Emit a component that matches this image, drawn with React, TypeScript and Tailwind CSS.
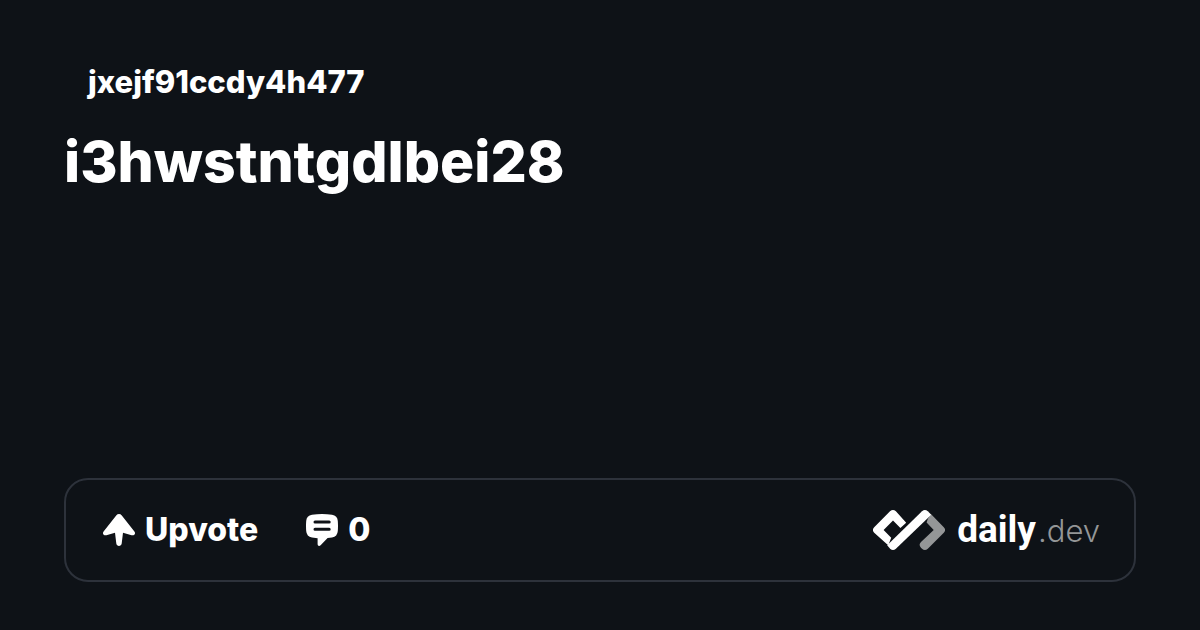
interface Post {
  author: string;
  title: string;
  comments: number;
}

const post: Post = {
  author: 'jxejf91ccdy4h477',
  title: 'i3hwstntgdlbei28',
  comments: 0,
};

function UpvoteIcon() {
  return (
    <svg className="h-8 w-8" viewBox="0 0 32 32" fill="currentColor" aria-hidden="true">
      <path d="M13.2 1.4C14.8-.4 17.2-.4 18.8 1.4L31.4 17.4C33 19.6 31.3 22 28.6 21.2L20 18.8L18.7 29.6C18.4 32.8 13.6 32.8 13.3 29.6L12 18.8L3.4 21.2C.7 22-1 19.6.6 17.4Z" />
    </svg>
  );
}

function CommentIcon() {
  return (
    <svg className="h-8 w-8" viewBox="0 0 32 32" fill="currentColor" aria-hidden="true">
      <path
        fillRule="evenodd"
        d="M6 .8Q16-.6 26 .8Q31.4 1.6 31.8 7Q32.2 12.5 31.8 17Q31.4 22.6 26 23.4L21.6 24L14.6 31.2C13.2 32.6 11.6 31.8 11.6 30V24.2L6 23.4Q.6 22.6.2 17Q-.2 12 .2 7Q.6 1.6 6 .8ZM9 6.5A1.5 1.5 0 0 0 9 9.5H23.2A1.5 1.5 0 0 0 23.2 6.5ZM9 13.8A1.5 1.5 0 0 0 9 16.8H23.2A1.5 1.5 0 0 0 23.2 13.8Z"
      />
    </svg>
  );
}

function LogoMark() {
  return (
    <svg className="h-10 w-18" viewBox="0 0 72 40" aria-hidden="true">
      <path
        fill="#949697"
        d="M58.4 4.4L70.8 17.2Q73.4 20 70.8 22.8L54.8 38.7Q51.9 41.2 49 38.7L48 37.7Q45.2 34.8 48 31.9L60.7 20L53.6 12.4Q55 7 58.4 4.4Z"
      />
      <path
        fill="#fff"
        d="M17 1.2Q20-1.2 22.9 1.2L33.2 12.8L27.4 18L20 10.6L10.6 20L18.2 27.8L15.6 34.6L14.6 34.8L1.2 22.8Q-1.4 20 1.2 17.2Z"
      />
      <path
        fill="#fff"
        d="M49 1.2Q51.9-1.2 54.8 1.2L58.3 4.7L22.9 38.8Q20 41.2 17.1 38.8L14.2 35.3Z"
      />
    </svg>
  );
}

function Logo() {
  return (
    <a href="#" className="flex items-center gap-3" aria-label="daily.dev">
      <LogoMark />
      <span className="flex items-baseline gap-[2px] leading-9">
        <span className="font-['Roboto',sans-serif] text-[37px] font-bold">daily</span>
        <span className="text-[31px] font-light text-[#949697]">.dev</span>
      </span>
    </a>
  );
}

export default function App() {
  return (
    <main className="flex min-h-screen flex-col justify-between bg-[#0e1217] px-16 pt-14 pb-12 font-['Inter',sans-serif] text-white">
      <header>
        <p className="pl-6 text-[31px] leading-[52px] font-extrabold">{post.author}</p>
        <h1 className="mt-3 text-[57px] leading-[84px] font-extrabold">{post.title}</h1>
      </header>

      <footer className="flex items-center justify-between rounded-3xl border-2 border-[#2d323b] py-[30px] pr-[34px] pl-[37px]">
        <div className="flex items-center gap-12 text-[32px] leading-10 font-extrabold">
          <button type="button" className="flex items-center gap-[10px]">
            <UpvoteIcon />
            Upvote
          </button>
          <button type="button" className="flex items-center gap-[10px]" aria-label="Comments">
            <CommentIcon />
            {post.comments}
          </button>
        </div>
        <Logo />
      </footer>
    </main>
  );
}
